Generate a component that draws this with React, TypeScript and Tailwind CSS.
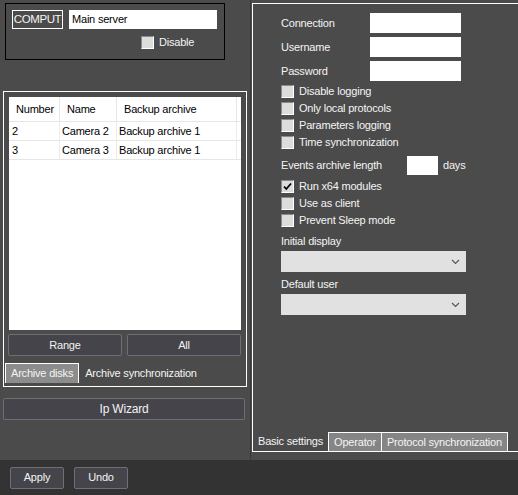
import React from 'react'

const font = { fontFamily: '"Liberation Sans", Arial, sans-serif' }

function Check({ checked = false }: { checked?: boolean }) {
  return (
    <span className="inline-flex w-[13px] h-[13px] shrink-0 items-center justify-center bg-[#dcdcdc] border-t border-l border-[#8a8a8a] border-r border-b border-r-white border-b-white">
      {checked && (
        <svg width="9" height="9" viewBox="0 0 9 9">
          <path d="M1 4.5 L3.3 7 L8 1.5" stroke="#000" strokeWidth="1.8" fill="none" />
        </svg>
      )}
    </span>
  )
}

function CheckRow({ label, checked }: { label: string; checked?: boolean }) {
  return (
    <div className="flex items-center gap-[5px] h-[17px]">
      <Check checked={checked} />
      <span>{label}</span>
    </div>
  )
}

function Field({ label }: { label: string }) {
  return (
    <div className="flex items-center h-[24px]">
      <span className="w-[89px]">{label}</span>
      <div className="w-[91px] h-[20px] bg-white" />
    </div>
  )
}

function Select() {
  return (
    <div className="w-[185px] h-[21px] bg-[#e1e1e1] flex items-center justify-end pr-[6px]">
      <svg width="9" height="6" viewBox="0 0 9 6">
        <path d="M1 1 L4.5 4.5 L8 1" stroke="#555" strokeWidth="1.2" fill="none" />
      </svg>
    </div>
  )
}

function DarkButton({ label, className = '' }: { label: string; className?: string }) {
  return (
    <div
      className={`h-[22px] flex items-center justify-center bg-[#45444a] border border-[#6e6e74] rounded-[2px] text-[#f2f2f2] ${className}`}
    >
      {label}
    </div>
  )
}

export default function App() {
  return (
    <div
      className="w-[518px] h-[495px] bg-[#4b4b4b] text-[#f4f4f4] text-[11px] tracking-[-0.2px] whitespace-nowrap flex flex-col overflow-hidden"
      style={font}
    >
      <div className="flex h-[460px]">
        {/* left column */}
        <div className="w-[250px] shrink-0 flex flex-col">
          <div className="ml-[5px] mt-[3px] w-[220px] h-[57px] border border-black">
            <div className="flex items-center pt-[6px] pl-[6px]">
              <div className="w-[51px] h-[19px] border border-white flex items-center justify-center text-[11.5px] tracking-[-0.4px]">
                COMPUT
              </div>
              <div className="ml-[6px] w-[148px] h-[19px] bg-white text-black flex items-center pl-[3px]">
                Main server
              </div>
            </div>
            <div className="flex items-center gap-[5px] mt-[5px] ml-[135px]">
              <Check />
              <span>Disable</span>
            </div>
          </div>

          <div className="ml-[3px] mt-[31px] w-[244px] h-[296px] border border-white flex flex-col">
            <div className="mx-[5px] mt-[5px] h-[233px] bg-white text-black">
              <div className="flex h-[25px] items-center border-b border-[#e6e6e6]">
                <div className="w-[51px] h-full flex items-center pl-[7px] border-r border-[#e6e6e6]">Number</div>
                <div className="w-[57px] h-full flex items-center pl-[7px] border-r border-[#e6e6e6]">Name</div>
                <div className="w-[120px] h-full flex items-center pl-[7px] border-r border-[#e6e6e6]">Backup archive</div>
              </div>
              {[
                ['2', 'Camera 2', 'Backup archive 1'],
                ['3', 'Camera 3', 'Backup archive 1'],
              ].map((r) => (
                <div key={r[0]} className="flex h-[19px] items-center border-b border-[#e6e6e6]">
                  <div className="w-[51px] h-full flex items-center pl-[3px] border-r border-[#ececec]">{r[0]}</div>
                  <div className="w-[57px] h-full flex items-center pl-[2px] border-r border-[#ececec]">{r[1]}</div>
                  <div className="w-[120px] h-full flex items-center pl-[2px] border-r border-[#ececec]">{r[2]}</div>
                </div>
              ))}
            </div>
            <div className="flex gap-[5px] mx-[4px] mt-[4px]">
              <DarkButton label="Range" className="w-[114px]" />
              <DarkButton label="All" className="w-[114px]" />
            </div>
            <div className="flex items-end mt-[7px] ml-[1px]">
              <div className="h-[20px] px-[5px] flex items-center bg-[#8c8c8c] border-t border-l border-r border-white">
                Archive disks
              </div>
              <div className="h-[20px] px-[6px] flex items-center">Archive synchronization</div>
            </div>
          </div>

          <DarkButton label="Ip Wizard" className="ml-[3px] mt-[11px] w-[242px] text-[12px]" />
        </div>

        {/* right panel */}
        <div className="flex-1 border-l border-[#3a3a3a]">
          <div className="mt-[3px] ml-[1px] h-[449px] w-[290px] border-t border-l border-b border-white flex flex-col">
            <div className="pl-[28px] pt-[7px] flex flex-col">
              <Field label="Connection" />
              <Field label="Username" />
              <Field label="Password" />
              <div>
                <CheckRow label="Disable logging" />
                <CheckRow label="Only local protocols" />
                <CheckRow label="Parameters logging" />
                <CheckRow label="Time synchronization" />
              </div>
              <div className="flex items-center h-[24px] mt-[2px]">
                <span className="w-[126px]">Events archive length</span>
                <div className="w-[31px] h-[19px] bg-white" />
                <span className="ml-[5px]">days</span>
              </div>
              <div className="mt-[1px]">
                <CheckRow label="Run x64 modules" checked />
                <CheckRow label="Use as client" />
                <CheckRow label="Prevent Sleep mode" />
              </div>
              <div className="mt-[5px] h-[14px] flex items-center">Initial display</div>
              <div className="mt-[3px]">
                <Select />
              </div>
              <div className="mt-[5px] h-[14px] flex items-center">Default user</div>
              <div className="mt-[3px]">
                <Select />
              </div>
            </div>
            <div className="mt-auto flex items-end">
              <div className="shrink-0 h-[20px] px-[5px] flex items-center">Basic settings</div>
              <div className="shrink-0 h-[19px] px-[5px] flex items-center bg-[#858585] border-t border-l border-r border-white">
                Operator
              </div>
              <div className="shrink-0 h-[19px] px-[5px] flex items-center bg-[#858585] border-t border-r border-white">
                Protocol synchronization
              </div>
            </div>
          </div>
        </div>
      </div>

      <div className="flex-1 bg-[#333333] flex items-center gap-[10px] pl-[10px]">
        <DarkButton label="Apply" className="w-[54px] h-[21px] bg-[#3c3c42]" />
        <DarkButton label="Undo" className="w-[54px] h-[21px] bg-[#3c3c42]" />
      </div>
    </div>
  )
}
